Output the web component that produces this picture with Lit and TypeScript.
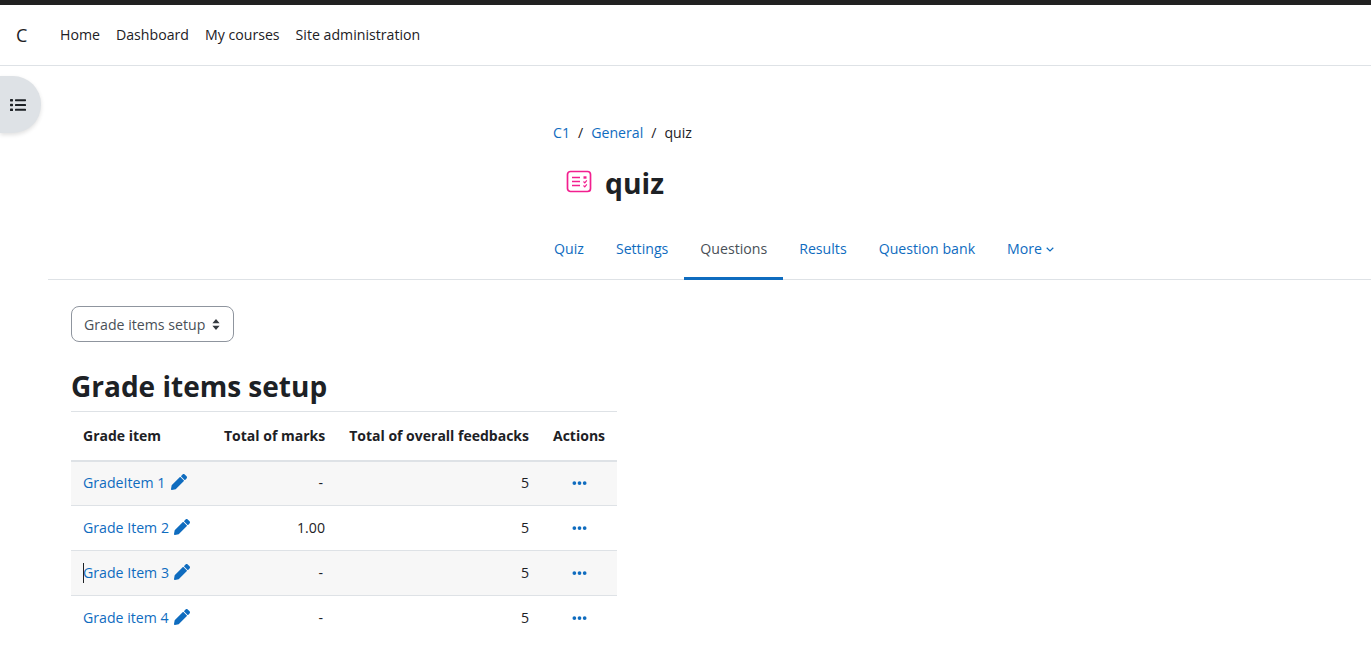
import { LitElement, html, css } from "lit";
import { customElement } from "lit/decorators.js";

const pencil = html`<svg class="pencil" viewBox="0 0 512 512" aria-hidden="true"><path fill="currentColor" d="M497.9 142.1l-46.1 46.1c-4.7 4.7-12.3 4.7-17 0l-111-111c-4.7-4.7-4.7-12.3 0-17l46.1-46.1c18.7-18.7 49.1-18.7 67.9 0l60.1 60.1c18.8 18.7 18.8 49.1 0 67.9zM284.2 99.8L21.6 362.4.4 483.9c-2.9 16.4 11.4 30.6 27.8 27.8l121.5-21.3 262.6-262.6c4.7-4.7 4.7-12.3 0-17l-111-111c-4.8-4.7-12.4-4.7-17.1 0z"/></svg>`;

const dots = html`<svg class="dots" viewBox="0 0 16 4" aria-hidden="true"><circle cx="2.5" cy="2" r="2" fill="currentColor"/><circle cx="8" cy="2" r="2" fill="currentColor"/><circle cx="13.5" cy="2" r="2" fill="currentColor"/></svg>`;

const rows = [
  { name: "GradeItem 1", marks: "-", feedback: "5", caret: false },
  { name: "Grade Item 2", marks: "1.00", feedback: "5", caret: false },
  { name: "Grade Item 3", marks: "-", feedback: "5", caret: true },
  { name: "Grade item 4", marks: "-", feedback: "5", caret: false },
];

const tabs = ["Quiz", "Settings", "Questions", "Results", "Question bank"];

@customElement("app-root")
export class AppRoot extends LitElement {
  static styles = css`
    :host {
      display: block;
      font-family: "Open Sans", "Noto Sans", sans-serif;
      font-size: 14.15px;
      color: #1d2125;
      background: #fff;
      height: 663px;
      overflow: hidden;
      position: relative;
    }
    a { color: #0f6cbf; text-decoration: none; }
    .topbar { height: 5px; background: #212121; }
    .navbar {
      height: 60px;
      border-bottom: 1px solid #dee2e6;
      display: flex;
      align-items: center;
      padding-left: 16px;
    }
    .brand { font-size: 18px; width: 36px; padding-bottom: 1px; }
    .nav { display: flex; gap: 16px; padding-left: 8px; padding-bottom: 1px; }
    .nav a { color: #1d2125; }
    .toggle {
      position: absolute;
      left: 0;
      top: 76px;
      width: 41px;
      height: 57px;
      background: #dee2e6;
      border-radius: 0 28px 28px 0;
      box-shadow: 0 2px 4px rgba(0,0,0,.12);
      display: flex;
      align-items: center;
      justify-content: center;
      padding-right: 5px;
      box-sizing: border-box;
    }
    .toggle svg { width: 16px; height: 14px; }
    .main { margin-left: 48px; }
    .head { padding: 57px 0 0 505px; }
    .crumbs { display: flex; gap: 8px; line-height: 20px; }
    .title { display: flex; align-items: center; gap: 13px; padding: 19px 0 0 13px; height: 42px; }
    .title svg { width: 26px; height: 24px; margin-bottom: 2px; }
    .title h1 { margin: 0; font-size: 28.3px; font-weight: 700; line-height: 36px; }
    .tabs {
      display: flex;
      margin-top: 27px;
      padding-left: 490px;
      border-bottom: 1px solid #dee2e6;
      height: 48px;
      box-sizing: content-box;
    }
    .tab {
      padding: 0 16px;
      line-height: 36px;
      height: 46px;
      display: flex;
      align-items: flex-start;
      gap: 4px;
    }
    .tab.active { color: #495057; border-bottom: 3px solid #0f6cbf; }
    .more-caret { width: 8px; height: 5px; margin: 16px 0 0; }
    .content { padding: 26px 0 0 23px; }
    .select {
      display: inline-flex;
      align-items: center;
      box-sizing: border-box;
      width: 163px;
      height: 36px;
      padding: 0 13px 0 12px;
      border: 1px solid #8f959e;
      border-radius: 8px;
      color: #495057;
      justify-content: space-between;
    }
    .select svg { width: 8px; height: 11px; }
    h2 { margin: 22px 0 0; font-size: 28px; font-weight: 700; line-height: 45px; height: 47px; }
    table {
      border-collapse: collapse;
      width: 546px;
      table-layout: fixed;
    }
    .c1 { width: 141px; }
    .c2 { width: 125px; }
    .c3 { width: 204px; }
    .c4 { width: 76px; }
    th, td { padding: 0 12px; border-top: 1px solid #dee2e6; box-sizing: border-box; font-weight: 400; text-align: left; white-space: nowrap; }
    thead th { height: 49px; font-size: 14px; font-weight: 700; border-bottom: 2px solid #dee2e6; }
    tbody tr:first-child td { border-top: 0; }
    tbody td { height: 45px; padding-bottom: 2px; }
    tbody tr:nth-child(odd) { background: #f7f7f7; }
    tbody tr:nth-child(even) { background: #fff; }
    .r { text-align: right; }
    .c { text-align: center; }
    td.dash { padding-right: 14px; }
    .name { display: inline-flex; align-items: center; gap: 5.5px; position: relative; }
    .pencil { width: 16px; height: 16px; }
    .dots { width: 15px; height: 4px; color: #0f6cbf; display: block; margin: 2px auto 0; }
    .caret { position: absolute; left: 0; top: 0; bottom: -1px; width: 1px; background: #1d2125; }
  `;

  render() {
    return html`
      <div class="topbar"></div>
      <header class="navbar">
        <span class="brand">C</span>
        <nav class="nav">
          <a href="#">Home</a><a href="#">Dashboard</a><a href="#">My courses</a><a href="#">Site administration</a>
        </nav>
      </header>
      <div class="toggle">
        <svg viewBox="0 0 16 14" aria-hidden="true"><g fill="#1d2125"><rect x="0" y="1" width="3" height="2.4" rx=".6"/><rect x="0" y="5.8" width="3" height="2.4" rx=".6"/><rect x="0" y="10.6" width="3" height="2.4" rx=".6"/><rect x="5" y="1.2" width="11" height="2" rx=".6"/><rect x="5" y="6" width="11" height="2" rx=".6"/><rect x="5" y="10.8" width="11" height="2" rx=".6"/></g></svg>
      </div>
      <div class="main">
        <div class="head">
          <div class="crumbs"><a href="#">C1</a><span>/</span><a href="#">General</a><span>/</span><span>quiz</span></div>
          <div class="title">
            <svg viewBox="0 0 26 24" fill="none" stroke="#f21f8f" stroke-width="1.7" aria-hidden="true"><rect x="1.5" y="1.5" width="23" height="20" rx="3"/><path d="M6 7.5h8M6 11.5h8M6 15.5h8" stroke-width="1.5"/><path d="M17.5 7.5h3" stroke-width="2.4"/><path d="M17.5 11.5l1.3 1.3 2-2.4M17.5 15.5l1.3 1.3 2-2.4" stroke-width="1.2"/></svg>
            <h1>quiz</h1>
          </div>
        </div>
        <nav class="tabs">
          ${tabs.map((t) => t === "Questions"
            ? html`<span class="tab active">${t}</span>`
            : html`<a class="tab" href="#">${t}</a>`)}
          <a class="tab" href="#">More<svg class="more-caret" viewBox="0 0 8 5" fill="none" stroke="currentColor" stroke-width="1.2" aria-hidden="true"><path d="M.7.8L4 4l3.3-3.2"/></svg></a>
        </nav>
        <div class="content">
          <div class="select">
            <span>Grade items setup</span>
            <svg viewBox="0 0 8 11" aria-hidden="true"><path fill="#343a40" d="M4 0l3.6 4.2H.4zM4 11L.4 6.8h7.2z"/></svg>
          </div>
          <h2>Grade items setup</h2>
          <table>
            <colgroup><col class="c1"/><col class="c2"/><col class="c3"/><col class="c4"/></colgroup>
            <thead><tr>
              <th>Grade item</th><th class="r">Total of marks</th><th class="r">Total of overall feedbacks</th><th class="c">Actions</th>
            </tr></thead>
            <tbody>
              ${rows.map((r) => html`<tr>
                <td><a class="name" href="#">${r.caret ? html`<span class="caret"></span>` : ""}${r.name}${pencil}</a></td>
                <td class="r ${r.marks === "-" ? "dash" : ""}">${r.marks}</td>
                <td class="r">${r.feedback}</td>
                <td class="c">${dots}</td>
              </tr>`)}
            </tbody>
          </table>
        </div>
      </div>
    `;
  }
}
